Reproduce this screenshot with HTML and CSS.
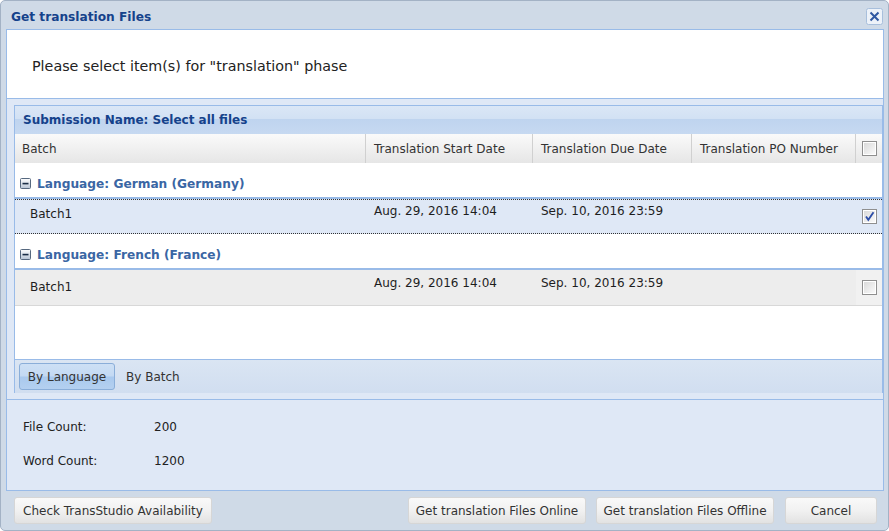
FILE: index.html
```html
<!DOCTYPE html>
<html>
<head>
<meta charset="utf-8">
<link rel="stylesheet" href="styles.css">
</head>
<body>
<svg class="defs" width="0" height="0">
  <defs>
    <linearGradient id="mg" x1="0" y1="0" x2="0" y2="1"><stop offset="0" stop-color="#ffffff"/><stop offset="1" stop-color="#b7c4d5"/></linearGradient>
    <linearGradient id="cg" x1="0" y1="0" x2="1" y2="1"><stop offset="0" stop-color="#d9d9d9"/><stop offset="1" stop-color="#fbfbfb"/></linearGradient>
  </defs>
</svg>
<div class="window">
  <div class="titlebar">
    <span class="title">Get translation Files</span>
    <span class="close"><svg width="17" height="17" viewBox="0 0 17 17"><rect x="0.5" y="0.5" width="16" height="16" rx="2" fill="#edf2f9" stroke="#a8bfdc"/><path d="M4.5 4.5 L12.5 12.5 M12.5 4.5 L4.5 12.5" stroke="#2f58a2" stroke-width="2"/></svg></span>
  </div>
  <div class="body">
    <div class="intro">Please select item(s) for "translation" phase</div>
    <div class="main">
      <div class="grid">
        <div class="grid-title">Submission Name: Select all files</div>
        <div class="cols">
          <div class="col">Batch</div>
          <div class="col">Translation Start Date</div>
          <div class="col">Translation Due Date</div>
          <div class="col">Translation PO Number</div>
          <div class="col chk"><svg width="15" height="15" viewBox="0 0 15 15"><rect x="0.5" y="0.5" width="14" height="14" fill="#f4f4f4" stroke="#8f8f8f"/><rect x="1.5" y="1.5" width="12" height="12" fill="url(#cg)" stroke="#ffffff"/></svg></div>
        </div>
        <div class="rows">
          <div class="group">
            <svg class="minus" width="11" height="11" viewBox="0 0 11 11"><rect x="0.5" y="0.5" width="10" height="10" rx="1" fill="url(#mg)" stroke="#56687f"/><rect x="2.5" y="4.8" width="6" height="1.6" fill="#1b2e47"/></svg>
            <span>Language: German (Germany)</span>
          </div>
          <div class="row sel">
            <div class="cell name">Batch1</div>
            <div class="cell date">Aug. 29, 2016 14:04</div>
            <div class="cell date">Sep. 10, 2016 23:59</div>
            <div class="cell"></div>
            <div class="cell box"><svg width="15" height="15" viewBox="0 0 15 15"><rect x="0.5" y="0.5" width="14" height="14" fill="#f4f4f4" stroke="#8f8f8f"/><rect x="1.5" y="1.5" width="12" height="12" fill="url(#cg)" stroke="#ffffff"/><path d="M4 7.5 L6.3 10.8 L11.5 3.2" fill="none" stroke="#2d4ea8" stroke-width="1.8"/></svg></div>
          </div>
          <div class="group">
            <svg class="minus" width="11" height="11" viewBox="0 0 11 11"><rect x="0.5" y="0.5" width="10" height="10" rx="1" fill="url(#mg)" stroke="#56687f"/><rect x="2.5" y="4.8" width="6" height="1.6" fill="#1b2e47"/></svg>
            <span>Language: French (France)</span>
          </div>
          <div class="row alt">
            <div class="cell name">Batch1</div>
            <div class="cell date">Aug. 29, 2016 14:04</div>
            <div class="cell date">Sep. 10, 2016 23:59</div>
            <div class="cell"></div>
            <div class="cell box light"><svg width="15" height="15" viewBox="0 0 15 15"><rect x="0.5" y="0.5" width="14" height="14" fill="#f4f4f4" stroke="#8f8f8f"/><rect x="1.5" y="1.5" width="12" height="12" fill="url(#cg)" stroke="#ffffff"/></svg></div>
          </div>
        </div>
        <div class="toolbar">
          <span class="tbtn pressed">By Language</span>
          <span class="tbtn">By Batch</span>
        </div>
      </div>
    </div>
    <div class="summary">
      <div class="srow"><span class="lbl">File Count:</span><span>200</span></div>
      <div class="srow"><span class="lbl">Word Count:</span><span>1200</span></div>
    </div>
  </div>
  <div class="footer">
    <button class="btn w198">Check TransStudio Availability</button>
    <button class="btn w178 push">Get translation Files Online</button>
    <button class="btn w178">Get translation Files Offline</button>
    <button class="btn w92">Cancel</button>
  </div>
</div>
</body>
</html>
```
FILE: styles.css
```css
* { box-sizing: border-box; }
html, body { margin: 0; padding: 0; }
body {
  width: 889px;
  height: 531px;
  background: #ffffff;
  font-family: "DejaVu Sans", "Noto Sans", sans-serif;
  font-size: 12px;
  color: #1e1e1e;
  overflow: hidden;
}
.defs { position: absolute; width: 0; height: 0; }

.window {
  width: 889px;
  height: 531px;
  border: 1px solid #a3b2c5;
  border-radius: 5px;
  background: #cfdae7;
  display: flex;
  flex-direction: column;
  overflow: hidden;
}

.titlebar {
  flex: none;
  height: 28px;
  display: flex;
  align-items: center;
  padding: 0 5px 0 10px;
}
.title {
  flex: 1;
  font-weight: bold;
  font-size: 12.2px;
  color: #15428b;
  padding-top: 3px;
}
.close { display: flex; margin-top: 2px; }

.body {
  flex: none;
  height: 462px;
  margin: 0 4px 0 5px;
  border: 1px solid #99bbe8;
  background: #dfe8f6;
  display: flex;
  flex-direction: column;
}

.intro {
  flex: none;
  height: 69px;
  background: #ffffff;
  border-bottom: 1px solid #99bbe8;
  padding: 3px 0 0 25px;
  display: flex;
  align-items: center;
  font-size: 14.3px;
  color: #222;
}

.main {
  flex: none;
  height: 300px;
  padding: 6px 0 0 7px;
}

.grid {
  height: 288px;
  border: 1px solid #99bbe8;
  border-bottom: none;
  display: flex;
  flex-direction: column;
  background: #ffffff;
}
.grid-title {
  flex: none;
  height: 28px;
  padding-left: 8px;
  display: flex;
  align-items: center;
  font-weight: bold;
  color: #15428b;
  background: linear-gradient(to bottom, #dbe7f6 0%, #d2e1f4 45%, #bfd4ef 48%, #c6d9f1 100%);
}

.cols, .row {
  display: grid;
  grid-template-columns: 351px 167px 159px 164px 26px;
}
.cols {
  flex: none;
  height: 29px;
  background: linear-gradient(to bottom, #fafafa, #e6e6e6);
  color: #333;
}
.col {
  display: flex;
  align-items: center;
  padding-left: 8px;
  border-right: 1px solid #d0d0d0;
}
.col:first-child { padding-left: 7px; }
.col.chk { border-right: none; padding-left: 6px; }
.col svg, .cell svg { display: block; }

.rows { flex: 1; background: #ffffff; }

.group {
  height: 36px;
  border-bottom: 2px solid #99bbe8;
  padding: 13px 0 0 5px;
  display: flex;
  align-items: flex-start;
  gap: 6px;
  font-weight: bold;
  font-size: 12.2px;
  color: #3a66a4;
  line-height: 16px;
}
.minus { margin-top: 2px; flex: none; }

.row { color: #1e1e1e; line-height: 16px; }
.row.sel {
  height: 35px;
  background: #dfe8f6;
  border-top: 1px dotted #333;
  border-bottom: 1px dotted #333;
}
.row.alt {
  height: 36px;
  background: #ededed;
  border-bottom: 1px solid #d8d8d8;
}
.cell { padding-left: 8px; }
.cell.name { padding-left: 15px; padding-top: 6px; }
.cell.date { padding-top: 3px; }
.cell.box { padding: 9px 0 0 6px; }
.row.alt .cell.name { padding-top: 9px; }
.row.alt .cell.date { padding-top: 5px; }
.row.alt .cell.box { padding-top: 10px; }
.cell.light { background: #f1f1f1; }

.toolbar {
  flex: none;
  height: 34px;
  border-top: 1px solid #99bbe8;
  background: linear-gradient(to bottom, #dae5f3, #d1def0);
  padding: 3px 0 0 4px;
  display: flex;
  align-items: flex-start;
  gap: 2px;
}
.tbtn {
  height: 27px;
  padding: 0 8px;
  display: flex;
  align-items: center;
  color: #333;
  border: 1px solid transparent;
  border-radius: 3px;
}
.tbtn.pressed {
  width: 96px;
  justify-content: center;
  padding: 0;
  border-color: #8aaed9;
  background: linear-gradient(to bottom, #cde0f5 0%, #c3d9f3 48%, #a9c9ee 52%, #b4d0f0 100%);
}

.summary {
  flex: 1;
  border-top: 1px solid #99bbe8;
  padding: 19px 0 0 16px;
  display: flex;
  flex-direction: column;
  gap: 18px;
  color: #222;
  line-height: 16px;
}
.srow { display: flex; }
.lbl { width: 131px; }

.footer {
  flex: 1;
  padding: 6px 11px 0 13px;
  display: flex;
  align-items: flex-start;
  gap: 10px;
}
.btn {
  height: 27px;
  font-family: "DejaVu Sans", "Noto Sans", sans-serif;
  font-size: 12px;
  color: #333;
  border: 1px solid #d6d6d6;
  border-radius: 3px;
  background: linear-gradient(to bottom, #f9f9f9 0%, #f1f1f1 50%, #e2e2e2 100%);
  padding: 0;
  text-align: center;
}
.w198 { width: 198px; }
.w178 { width: 178px; }
.w92 { width: 92px; margin-left: 1px; }
.push { margin-left: auto; }
```
